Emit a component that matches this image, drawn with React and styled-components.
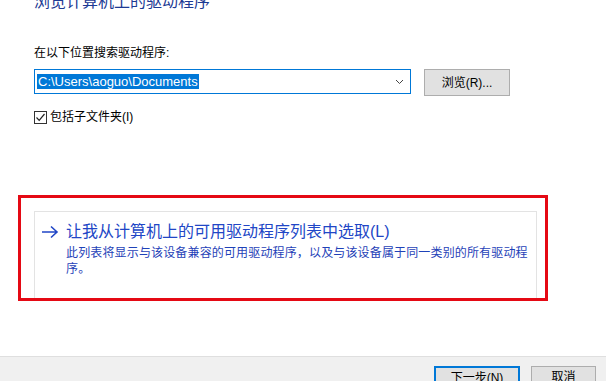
import React from "react";
import styled, { createGlobalStyle } from "styled-components";

const GlobalStyle = createGlobalStyle`
  html, body {
    margin: 0;
    padding: 0;
    background: #ffffff;
  }
  body {
    font-family: "Liberation Sans", "Noto Sans CJK SC", sans-serif;
    color: #000000;
  }
`;

const font = `"Liberation Sans", "Noto Sans CJK SC", sans-serif`;

const Window = styled.div`
  width: 606px;
  height: 381px;
  overflow: hidden;
  display: flex;
  flex-direction: column;
  background: #ffffff;
  font-family: ${font};
`;

const Content = styled.div`
  flex: 1;
  display: flex;
  flex-direction: column;
`;

const Title = styled.div`
  margin: -8px 0 0 34px;
  font-size: 16px;
  line-height: 20px;
  color: #1c3a94;
`;

const Label = styled.div`
  margin: 33px 0 0 34px;
  font-size: 12px;
  line-height: 16px;
  color: #000;
`;

const PathRow = styled.div`
  display: flex;
  align-items: flex-start;
  gap: 13px;
  margin: 8px 0 0 34px;
`;

const Combo = styled.div`
  box-sizing: border-box;
  width: 377px;
  height: 25px;
  border: 1px solid #0078d7;
  display: flex;
  align-items: center;
  justify-content: space-between;
  padding: 0 6px 0 2px;
`;

const Selected = styled.span`
  background: #0078d7;
  color: #ffffff;
  font-size: 13px;
  line-height: 15px;
  padding: 0 1px;
`;

const Button = styled.div`
  box-sizing: border-box;
  width: ${p => p.$w}px;
  height: ${p => p.$h || 26}px;
  background: #e1e1e1;
  border: ${p => (p.$default ? "2px solid #0078d7" : "1px solid #adadad")};
  display: flex;
  align-items: ${p => (p.$top ? "flex-start" : "center")};
  justify-content: center;
  padding-top: ${p => (p.$top ? "2px" : "0")};
  font-size: 12px;
  line-height: 16px;
  color: #000;
`;

const CheckRow = styled.div`
  display: flex;
  align-items: center;
  gap: 3px;
  margin: 13px 0 0 34px;
  font-size: 12px;
  line-height: 16px;
`;

const Box = styled.div`
  box-sizing: border-box;
  width: 13px;
  height: 13px;
  border: 1px solid #333333;
  display: flex;
  align-items: center;
  justify-content: center;
`;

const Highlight = styled.div`
  margin: 70px 0 0 18px;
  width: 530px;
  box-sizing: border-box;
  border: 3px solid #e50914;
  padding: 13px 8px 0 13px;
`;

const Card = styled.div`
  box-sizing: border-box;
  height: 87px;
  border: 1px solid #e3e3e3;
  border-bottom: none;
  padding: 10px 0 0 6px;
  display: grid;
  grid-template-columns: 25px 1fr;
  color: #1f46c8;
`;

const Arrow = styled.div`
  padding-top: 3px;
`;

const LinkTitle = styled.div`
  font-size: 16px;
  line-height: 20px;
  color: #2146c6;
`;

const LinkText = styled.div`
  margin-top: 3px;
  font-size: 12px;
  letter-spacing: 0.15px;
  line-height: 16px;
  color: #1f42b8;
`;

const Footer = styled.div`
  height: 25px;
  box-sizing: border-box;
  background: #f0f0f0;
  border-top: 1px solid #dfdfdf;
  display: flex;
  justify-content: flex-end;
  gap: 11px;
  padding: 9px 10px 0 0;
`;

export default function App() {
  return (
    <Window>
      <GlobalStyle />
      <Content>
        <Title>浏览计算机上的驱动程序</Title>
        <Label>在以下位置搜索驱动程序:</Label>
        <PathRow>
          <Combo>
            <Selected>C:\Users\aoguo\Documents</Selected>
            <svg width="9" height="6" viewBox="0 0 9 6">
              <path d="M1 1 L4.5 4.5 L8 1" fill="none" stroke="#444" strokeWidth="1" />
            </svg>
          </Combo>
          <Button $w={86} $h={27}>浏览(R)...</Button>
        </PathRow>
        <CheckRow>
          <Box>
            <svg width="11" height="11" viewBox="0 0 11 11">
              <path d="M1.5 5.5 L4.2 8.3 L9.5 2" fill="none" stroke="#222" strokeWidth="1.2" />
            </svg>
          </Box>
          <span>包括子文件夹(I)</span>
        </CheckRow>
        <Highlight>
          <Card>
            <Arrow>
              <svg width="18" height="14" viewBox="0 0 18 14">
                <path d="M1 7 H16 M10 1.5 L16 7 L10 12.5" fill="none" stroke="#2146c6" strokeWidth="1.6" />
              </svg>
            </Arrow>
            <div>
              <LinkTitle>让我从计算机上的可用驱动程序列表中选取(L)</LinkTitle>
              <LinkText>
                此列表将显示与该设备兼容的可用驱动程序，以及与该设备属于同一类别的所有驱动程序。
              </LinkText>
            </div>
          </Card>
        </Highlight>
      </Content>
      <Footer>
        <Button $w={86} $h={30} $default $top>下一步(N)</Button>
        <Button $w={65} $h={30} $top>取消</Button>
      </Footer>
    </Window>
  );
}
